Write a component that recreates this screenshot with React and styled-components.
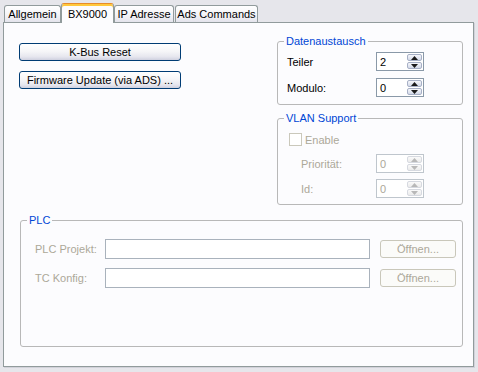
import React from 'react';
import styled, { createGlobalStyle } from 'styled-components';

const Global = createGlobalStyle`
  html, body { margin: 0; padding: 0; background: #e6e6eb; }
  body {
    font-family: "Liberation Sans", Arial, sans-serif;
    font-size: 11px;
    color: #000;
  }
  #root { width: 478px; height: 372px; }
`;

const Window = styled.div`
  width: 478px;
  height: 372px;
  box-sizing: border-box;
  padding: 3px 4px 0 3px;
  display: flex;
  flex-direction: column;
`;

const TabRow = styled.div`
  display: flex;
  align-items: flex-end;
  margin-left: 1px;
  height: 19px;
`;

const Tab = styled.div`
  box-sizing: border-box;
  width: ${p => p.$w}px;
  height: ${p => (p.$active ? 20 : 17)}px;
  margin-bottom: ${p => (p.$active ? -1 : 0)}px;
  margin-left: ${p => p.$gap || 0}px;
  border: 1px solid #919b9c;
  border-bottom: none;
  border-top-color: ${p => (p.$active ? '#e68b2c' : '#919b9c')};
  border-radius: 3px 3px 0 0;
  background: ${p =>
    p.$active
      ? '#fcfcfe'
      : 'linear-gradient(to bottom, #ffffff 0%, #f5f5f8 50%, #e4e4ec 100%)'};
  box-shadow: ${p => (p.$active ? 'inset 0 2px 0 #ffc83c' : 'none')};
  position: ${p => (p.$active ? 'relative' : 'static')};
  z-index: ${p => (p.$active ? 1 : 'auto')};
  display: flex;
  align-items: center;
  justify-content: center;
  padding-top: ${p => (p.$active ? 1 : 0)}px;
  white-space: nowrap;
`;

const Panel = styled.div`
  box-sizing: border-box;
  width: 471px;
  height: 345px;
  border: 1px solid #919b9c;
  background: #fcfcfe;
  box-shadow: 1px 1px 0 #d2d2da;
  padding: 12px 10px 0 15px;
  display: flex;
  flex-direction: column;
`;

const TopRow = styled.div`
  display: flex;
  justify-content: space-between;
  align-items: flex-start;
`;

const ButtonColumn = styled.div`
  display: flex;
  flex-direction: column;
  gap: 10px;
  padding-top: 8px;
`;

const XpButton = styled.div`
  box-sizing: border-box;
  width: ${p => p.$w}px;
  height: 18px;
  border: 1px solid ${p => (p.$disabled ? '#c9c7ba' : '#003c74')};
  border-radius: 3px;
  background: ${p =>
    p.$disabled
      ? '#fbfbf9'
      : 'linear-gradient(to bottom, #ffffff 0%, #f6f6f8 45%, #e6e6ee 80%, #cfd0df 100%)'};
  color: ${p => (p.$disabled ? '#aca899' : '#000')};
  display: flex;
  align-items: center;
  justify-content: center;
  white-space: nowrap;
`;

const RightColumn = styled.div`
  width: 186px;
  display: flex;
  flex-direction: column;
  gap: 7px;
`;

const Group = styled.fieldset`
  box-sizing: border-box;
  margin: 0;
  margin-left: ${p => p.$ml || 0}px;
  padding: 0;
  min-width: 0;
  width: ${p => p.$w}px;
  height: ${p => (p.$h ? `${p.$h}px` : 'auto')};
  border: 1px solid #b8b8b8;
  border-radius: 3px;
`;

const Legend = styled.legend`
  margin-left: 6px;
  padding: 0 2px;
  line-height: 13px;
  font-size: 11px;
  color: #0046d5;
`;

const GroupBody = styled.div`
  display: flex;
  flex-direction: column;
  gap: ${p => p.$gap}px;
  padding: ${p => p.$pad};
`;

const FieldRow = styled.div`
  display: flex;
  align-items: center;
  height: ${p => p.$h || 19}px;
  margin-top: ${p => p.$mt || 0}px;
`;

const Label = styled.span`
  width: ${p => p.$w}px;
  padding-left: ${p => p.$indent || 0}px;
  box-sizing: border-box;
  flex: none;
  color: ${p => (p.$disabled ? '#aca899' : '#000')};
  white-space: nowrap;
`;

const SpinBox = styled.div`
  box-sizing: border-box;
  width: 48px;
  height: 19px;
  border: 1px solid ${p => (p.$disabled ? '#bfc6cd' : '#8a99a8')};
  background: #fff;
  display: flex;
  align-items: center;
  justify-content: space-between;
  padding: 1px 1px 1px 3px;
  color: ${p => (p.$disabled ? '#aca899' : '#000')};
`;

const SpinButtons = styled.div`
  display: flex;
  flex-direction: column;
  gap: 1px;
  height: 100%;
`;

const SpinBtn = styled.div`
  box-sizing: border-box;
  width: 15px;
  flex: 1;
  border: 1px solid ${p => (p.$disabled ? '#d6d9e0' : '#a7b0c6')};
  border-radius: 2px;
  background: ${p =>
    p.$disabled
      ? 'linear-gradient(to bottom, #fafafa, #ebebeb)'
      : 'linear-gradient(to bottom, #f6f7fb, #d3d9e8)'};
  display: flex;
  align-items: center;
  justify-content: center;
`;

const CheckRow = styled.div`
  display: flex;
  align-items: center;
  gap: 3px;
  margin-left: 2px;
  height: 13px;
  color: #aca899;
`;

const CheckBox = styled.div`
  box-sizing: border-box;
  width: 13px;
  height: 13px;
  border: 1px solid #cac8bb;
  background: #fff;
`;

const TextBox = styled.div`
  box-sizing: border-box;
  width: 265px;
  height: 20px;
  border: 1px solid #a9b2bc;
  background: #fff;
  margin-right: 10px;
`;

const Arrow = ({ up, disabled }) => (
  <svg width="7" height="4" viewBox="0 0 7 4">
    <polygon
      points={up ? '3.5,0 7,4 0,4' : '0,0 7,0 3.5,4'}
      fill={disabled ? '#b8b8b8' : '#1a1a1a'}
    />
  </svg>
);

const Spin = ({ value, disabled }) => (
  <SpinBox $disabled={disabled}>
    <span>{value}</span>
    <SpinButtons>
      <SpinBtn $disabled={disabled}>
        <Arrow up disabled={disabled} />
      </SpinBtn>
      <SpinBtn $disabled={disabled}>
        <Arrow disabled={disabled} />
      </SpinBtn>
    </SpinButtons>
  </SpinBox>
);

export default function App() {
  return (
    <>
      <Global />
      <Window>
        <TabRow>
          <Tab $w={57}>Allgemein</Tab>
          <Tab $w={53} $active>BX9000</Tab>
          <Tab $w={60}>IP Adresse</Tab>
          <Tab $w={83} $gap={1}>Ads Commands</Tab>
        </TabRow>
        <Panel>
          <TopRow>
            <ButtonColumn>
              <XpButton $w={162}>K-Bus Reset</XpButton>
              <XpButton $w={162}>Firmware Update (via ADS) ...</XpButton>
            </ButtonColumn>
            <RightColumn>
              <Group $w={186}>
                <Legend>Datenaustausch</Legend>
                <GroupBody $gap={7} $pad="4px 0 7px 9px">
                  <FieldRow>
                    <Label $w={89}>Teiler</Label>
                    <Spin value="2" />
                  </FieldRow>
                  <FieldRow>
                    <Label $w={89}>Modulo:</Label>
                    <Spin value="0" />
                  </FieldRow>
                </GroupBody>
              </Group>
              <Group $w={186}>
                <Legend>VLAN Support</Legend>
                <GroupBody $gap={6} $pad="8px 0 6px 9px">
                  <CheckRow>
                    <CheckBox />
                    <span>Enable</span>
                  </CheckRow>
                  <FieldRow $mt={2}>
                    <Label $w={89} $indent={14} $disabled>Priorität:</Label>
                    <Spin value="0" disabled />
                  </FieldRow>
                  <FieldRow>
                    <Label $w={89} $indent={14} $disabled>Id:</Label>
                    <Spin value="0" disabled />
                  </FieldRow>
                </GroupBody>
              </Group>
            </RightColumn>
          </TopRow>
          <Group $w={443} $h={133} $ml={1} style={{ marginTop: 9 }}>
            <Legend>PLC</Legend>
            <GroupBody $gap={9} $pad="12px 0 0 14px">
              <FieldRow $h={20}>
                <Label $w={70} $disabled>PLC Projekt:</Label>
                <TextBox />
                <XpButton $w={76} $disabled>Öffnen...</XpButton>
              </FieldRow>
              <FieldRow $h={20}>
                <Label $w={70} $disabled>TC Konfig:</Label>
                <TextBox />
                <XpButton $w={76} $disabled>Öffnen...</XpButton>
              </FieldRow>
            </GroupBody>
          </Group>
        </Panel>
      </Window>
    </>
  );
}
